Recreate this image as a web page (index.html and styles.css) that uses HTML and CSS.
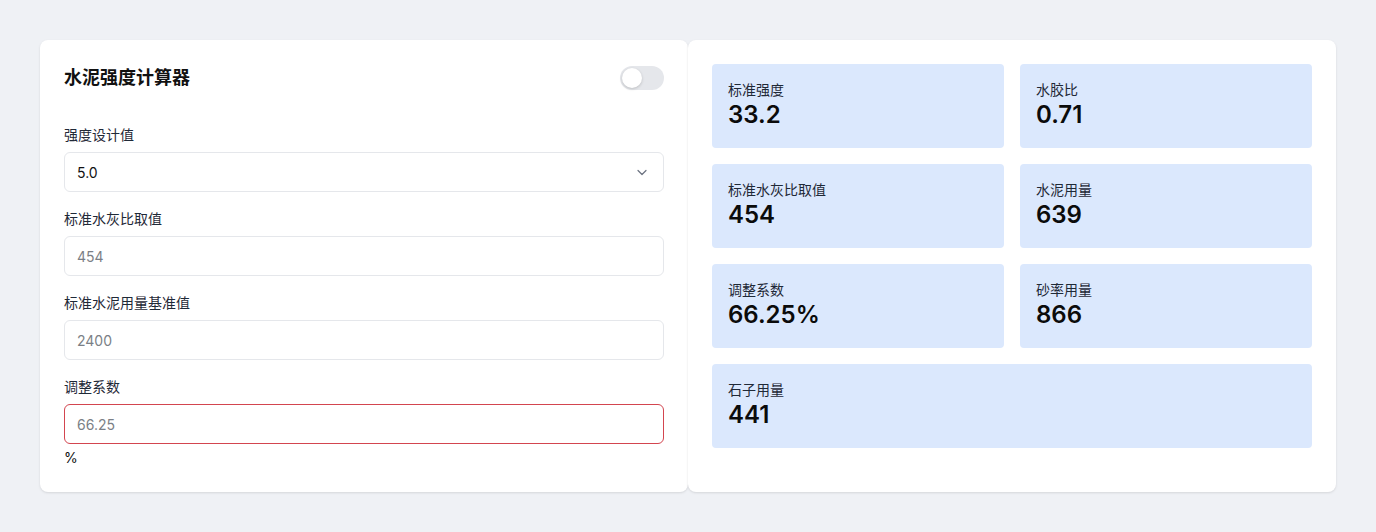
FILE: index.html
```html
<!DOCTYPE html>
<html lang="zh">
<head>
<meta charset="utf-8">
<title>水泥强度计算器</title>
<link rel="stylesheet" href="styles.css">
</head>
<body>
<main class="layout">
  <section class="card form-card">
    <header class="form-head">
      <h1 class="title">水泥强度计算器</h1>
      <span class="toggle"><span class="knob"></span></span>
    </header>
    <div class="field">
      <label class="label">强度设计值</label>
      <div class="select">
        <span class="select-value">5.0</span>
        <svg class="chev" width="12" height="12" viewBox="0 0 12 12"><path d="M2 4.5 6 8.5 10 4.5" fill="none" stroke="#6b7280" stroke-width="1.2" stroke-linecap="round" stroke-linejoin="round"/></svg>
      </div>
    </div>
    <div class="field">
      <label class="label">标准水灰比取值</label>
      <div class="input">454</div>
    </div>
    <div class="field">
      <label class="label">标准水泥用量基准值</label>
      <div class="input">2400</div>
    </div>
    <div class="field">
      <label class="label">调整系数</label>
      <div class="input input-error">66.25</div>
      <div class="unit">%</div>
    </div>
  </section>
  <section class="card result-card">
    <div class="results">
      <div class="stat"><div class="stat-label">标准强度</div><div class="stat-value">33.2</div></div>
      <div class="stat"><div class="stat-label">水胶比</div><div class="stat-value">0.71</div></div>
      <div class="stat"><div class="stat-label">标准水灰比取值</div><div class="stat-value">454</div></div>
      <div class="stat"><div class="stat-label">水泥用量</div><div class="stat-value">639</div></div>
      <div class="stat"><div class="stat-label">调整系数</div><div class="stat-value">66.25%</div></div>
      <div class="stat"><div class="stat-label">砂率用量</div><div class="stat-value">866</div></div>
      <div class="stat stat-wide"><div class="stat-label">石子用量</div><div class="stat-value">441</div></div>
    </div>
  </section>
</main>
</body>
</html>
```
FILE: styles.css
```css
* { box-sizing: border-box; }
html, body { margin: 0; }
body {
  background: #eff1f5;
  font-family: Inter, "Noto Sans CJK SC", sans-serif;
  color: #111827;
  padding: 40px;
}
.layout {
  display: grid;
  grid-template-columns: 1fr 1fr;
  width: 1296px;
}
.card {
  background: #fff;
  border-radius: 8px;
  box-shadow: 0 1px 3px rgba(0,0,0,0.08), 0 1px 2px rgba(0,0,0,0.04);
  padding: 24px;
}
.form-head {
  display: flex;
  align-items: center;
  justify-content: space-between;
  height: 28px;
  margin-bottom: 32px;
}
.title {
  margin: 0 0 4px;
  font-size: 18px;
  font-weight: 700;
  line-height: 28px;
  font-family: "Noto Sans CJK SC", sans-serif;
  color: #111;
}
.toggle {
  width: 44px;
  height: 24px;
  border-radius: 12px;
  background: #e5e7eb;
  display: flex;
  align-items: center;
  padding: 2px;
}
.knob {
  width: 20px;
  height: 20px;
  border-radius: 50%;
  background: #fff;
  box-shadow: 0 1px 3px rgba(0,0,0,0.18);
}
.field { margin-bottom: 16px; }
.field:last-child { margin-bottom: 0; }
.label {
  display: block;
  font-family: "Noto Sans CJK SC", sans-serif;
  font-size: 14px;
  line-height: 20px;
  margin-bottom: 8px;
  color: #1f2937;
}
.select, .input {
  height: 40px;
  border: 1px solid #e5e7eb;
  border-radius: 6px;
  display: flex;
  align-items: center;
  padding: 0 12px;
  font-size: 14px;
}
.select { justify-content: space-between; }
.select-value { color: #111; }
.chev { margin-right: 3px; }
.input { color: #7b7f86; }
.input-error { border-color: #d3454f; }
.unit {
  font-size: 14px;
  line-height: 18px;
  margin-top: 5px;
  padding-bottom: 1px;
  color: #111;
}
.results {
  display: grid;
  grid-template-columns: 1fr 1fr;
  gap: 16px;
}
.stat {
  background: #dbe8fd;
  border-radius: 4px;
  height: 84px;
  padding: 15px 16px;
}
.stat-wide { grid-column: span 2; }
.stat-label {
  font-family: "Noto Sans CJK SC", sans-serif;
  font-size: 14px;
  line-height: 20px;
  color: #1f2937;
}
.stat-value {
  font-size: 24px;
  font-weight: 600;
  line-height: 32px;
  color: #0b0b0b;
}
```
